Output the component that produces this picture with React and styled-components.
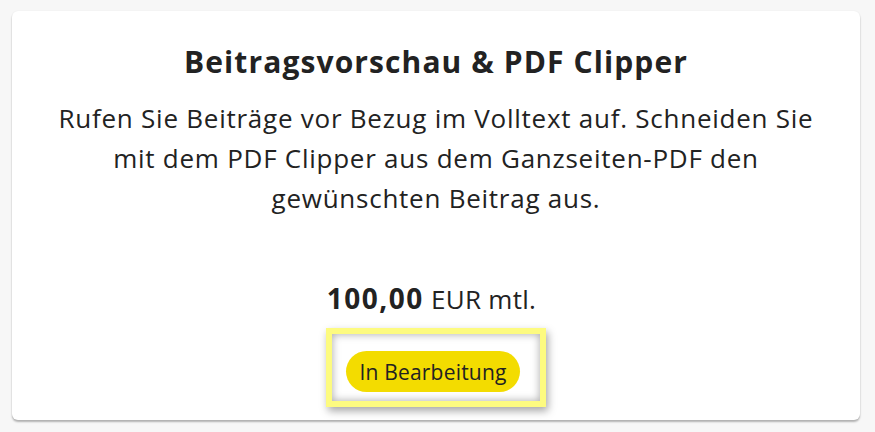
import React from "react";
import styled, { createGlobalStyle } from "styled-components";

const Global = createGlobalStyle`
  html, body { margin: 0; padding: 0; background: #f7f7f7; }
  body { font-family: "Open Sans", "Noto Sans", sans-serif; color: #222; }
`;

const Page = styled.div`
  padding: 11px 15px 12px 12px;
`;

const Card = styled.section`
  background: #fff;
  border-radius: 6px;
  box-shadow: 0 2px 2px rgba(0,0,0,0.28), 0 0 2px rgba(0,0,0,0.06);
  height: 409px;
  box-sizing: border-box;
  padding: 31px 10px 0;
  display: flex;
  flex-direction: column;
  align-items: center;
  text-align: center;
`;

const Title = styled.h2`
  margin: 0;
  font-size: 30px;
  font-weight: 700;
  line-height: 40px;
  letter-spacing: 1.1px;
  color: #222;
`;

const Text = styled.p`
  margin: 16px 0 0;
  font-size: 26px;
  line-height: 40px;
  letter-spacing: 0.75px;
  white-space: nowrap;
`;

const Price = styled.div`
  margin: 63px 9px 0 0;
  font-size: 26px;
  line-height: 34px;
  letter-spacing: 0.3px;
`;

const Amount = styled.b`
  font-size: 28px;
  font-weight: 700;
  letter-spacing: 1.5px;
`;

const Focus = styled.div`
  margin-top: 12px;
  border: 6px solid #fdfb80;
  padding: 17px 20px 9px 14px;
  box-shadow: inset 0 0 8px rgba(0,0,0,0.35), 2px 4px 8px rgba(0,0,0,0.35);
  background: #fff;
`;

const Badge = styled.span`
  display: inline-flex;
  align-items: center;
  justify-content: center;
  height: 41px;
  width: 174px;
  border-radius: 21px;
  background: #f3dc00;
  color: #222;
  font-size: 21px;
  letter-spacing: 0.2px;
`;

export default function App() {
  return (
    <>
      <Global />
      <Page>
        <Card>
          <Title>Beitragsvorschau &amp; PDF Clipper</Title>
          <Text>
            Rufen Sie Beiträge vor Bezug im Volltext auf. Schneiden Sie<br />
            mit dem PDF Clipper aus dem Ganzseiten-PDF den<br />
            gewünschten Beitrag aus.
          </Text>
          <Price><Amount>100,00</Amount> EUR mtl.</Price>
          <Focus>
            <Badge>In Bearbeitung</Badge>
          </Focus>
        </Card>
      </Page>
    </>
  );
}
